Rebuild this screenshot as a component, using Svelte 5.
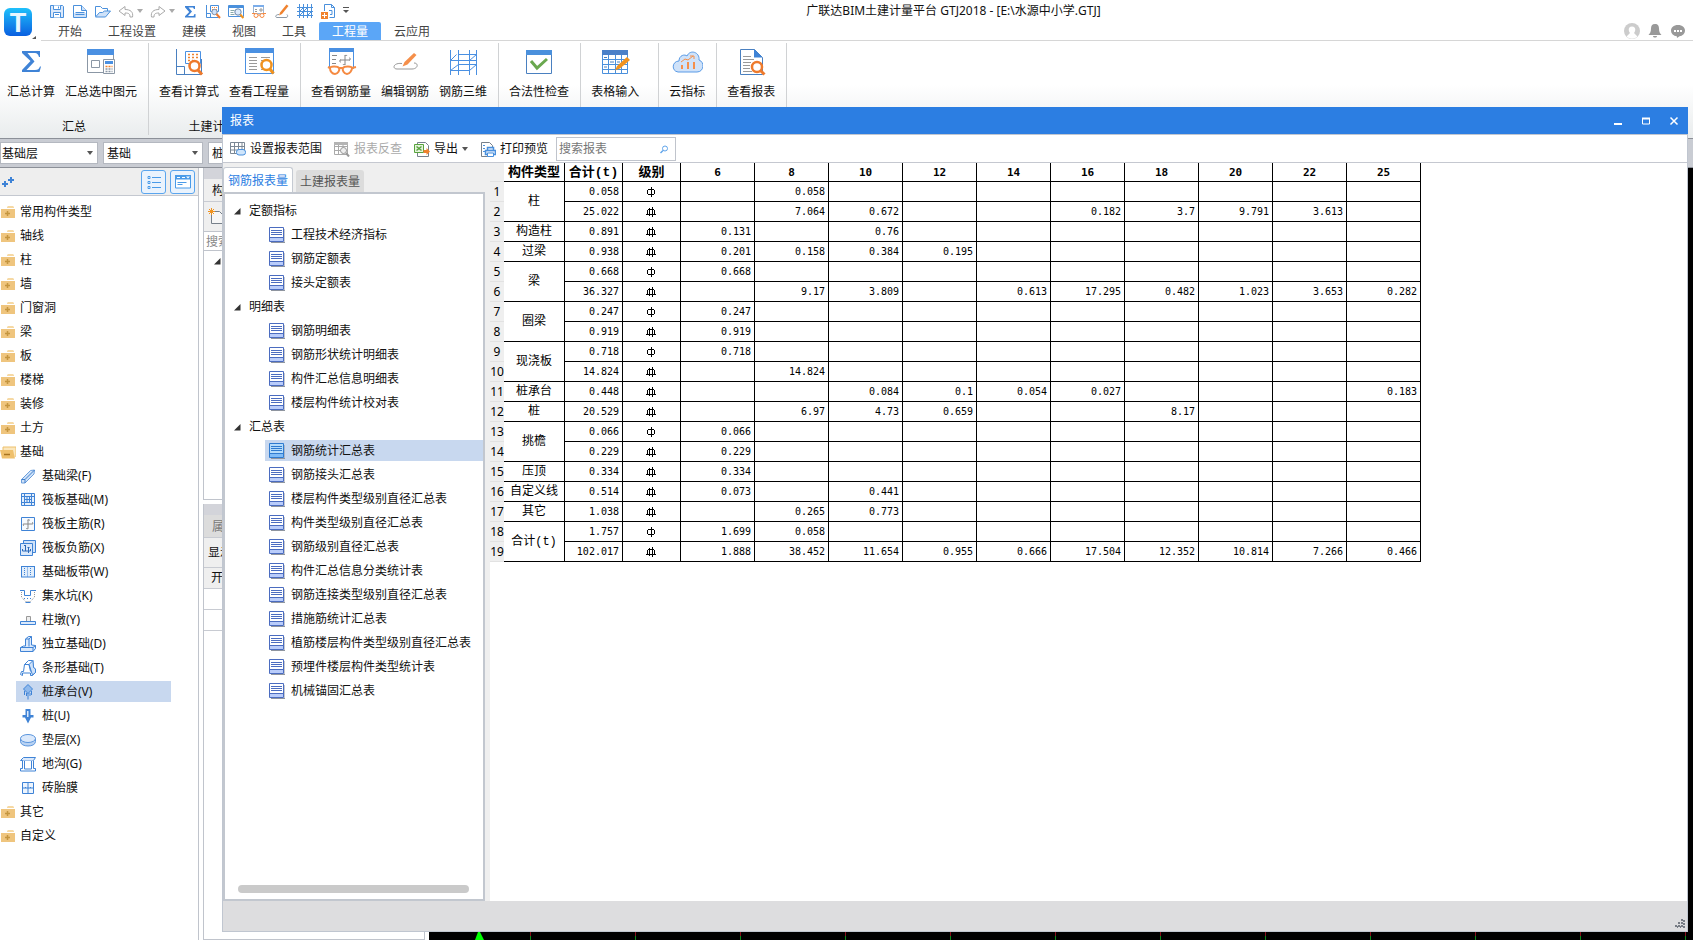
<!--
  Quantity take-off workspace: ribbon, component navigator and the report window.
-->
<script>
  const quickTools = [
    { icon: 'save', label: '保存' },
    { icon: 'page', label: '新建' },
    { icon: 'open', label: '打开' },
    { icon: 'undo', label: '撤销', split: true },
    { icon: 'redo', label: '恢复', split: true },
    { icon: 'sigmaSmall', label: '汇总计算' },
    { icon: 'formulaSmall', label: '查看计算式' },
    { icon: 'quantitySmall', label: '查看工程量' },
    { icon: 'rebarSmall', label: '查看钢筋量' },
    { icon: 'editSmall', label: '编辑钢筋' },
    { icon: 'gridSmall', label: '钢筋三维' },
    { icon: 'addPage', label: '添加' }
  ];

  const menuTabs = ['开始', '工程设置', '建模', '视图', '工具', '工程量', '云应用'];
  let activeMenu = $state('工程量');

  const ribbonGroups = [
    { label: '汇总', tools: [['sigma', '汇总计算'], ['calcSelected', '汇总选中图元']] },
    { label: '土建计算结果', tools: [['formula', '查看计算式'], ['quantity', '查看工程量']] },
    { tools: [['rebarView', '查看钢筋量'], ['rebarEdit', '编辑钢筋'], ['rebar3d', '钢筋三维']] },
    { tools: [['check', '合法性检查']] },
    { wide: true, tools: [['tableInput', '表格输入']] },
    { tools: [['cloud', '云指标']] },
    { tools: [['report', '查看报表']] }
  ];

  const categories = [
    { name: '常用构件类型' },
    { name: '轴线' },
    { name: '柱' },
    { name: '墙' },
    { name: '门窗洞' },
    { name: '梁' },
    { name: '板' },
    { name: '楼梯' },
    { name: '装修' },
    { name: '土方' },
    {
      name: '基础',
      items: [
        ['beam', '基础梁(F)'],
        ['raft', '筏板基础(M)'],
        ['raftMain', '筏板主筋(R)'],
        ['raftNeg', '筏板负筋(X)'],
        ['strip', '基础板带(W)'],
        ['pit', '集水坑(K)'],
        ['pier', '柱墩(Y)'],
        ['isolated', '独立基础(D)'],
        ['stripBase', '条形基础(T)'],
        ['pileCap', '桩承台(V)'],
        ['pile', '桩(U)'],
        ['cushion', '垫层(X)'],
        ['trench', '地沟(G)'],
        ['brick', '砖胎膜']
      ]
    },
    { name: '其它' },
    { name: '自定义' }
  ];
  let activeComponent = $state('桩承台(V)');

  const reportTree = [
    { name: '定额指标', items: ['工程技术经济指标', '钢筋定额表', '接头定额表'] },
    { name: '明细表', items: ['钢筋明细表', '钢筋形状统计明细表', '构件汇总信息明细表', '楼层构件统计校对表'] },
    {
      name: '汇总表',
      items: [
        '钢筋统计汇总表',
        '钢筋接头汇总表',
        '楼层构件类型级别直径汇总表',
        '构件类型级别直径汇总表',
        '钢筋级别直径汇总表',
        '构件汇总信息分类统计表',
        '钢筋连接类型级别直径汇总表',
        '措施筋统计汇总表',
        '植筋楼层构件类型级别直径汇总表',
        '预埋件楼层构件类型统计表',
        '机械锚固汇总表'
      ]
    }
  ];
  let activeReport = $state('钢筋统计汇总表');

  const diameters = ['6', '8', '10', '12', '14', '16', '18', '20', '22', '25'];

  // grade 1 = plain bar, grade 3 = HRB400; the rest maps diameter to tonnes
  const groups = [
    { type: '柱', rows: [
      { total: '0.058', grade: 1, 8: '0.058' },
      { total: '25.022', grade: 3, 8: '7.064', 10: '0.672', 16: '0.182', 18: '3.7', 20: '9.791', 22: '3.613' }
    ] },
    { type: '构造柱', rows: [{ total: '0.891', grade: 3, 6: '0.131', 10: '0.76' }] },
    { type: '过梁', rows: [{ total: '0.938', grade: 3, 6: '0.201', 8: '0.158', 10: '0.384', 12: '0.195' }] },
    { type: '梁', rows: [
      { total: '0.668', grade: 1, 6: '0.668' },
      { total: '36.327', grade: 3, 8: '9.17', 10: '3.809', 14: '0.613', 16: '17.295', 18: '0.482', 20: '1.023', 22: '3.653', 25: '0.282' }
    ] },
    { type: '圈梁', rows: [
      { total: '0.247', grade: 1, 6: '0.247' },
      { total: '0.919', grade: 3, 6: '0.919' }
    ] },
    { type: '现浇板', rows: [
      { total: '0.718', grade: 1, 6: '0.718' },
      { total: '14.824', grade: 3, 8: '14.824' }
    ] },
    { type: '桩承台', rows: [{ total: '0.448', grade: 3, 10: '0.084', 12: '0.1', 14: '0.054', 16: '0.027', 25: '0.183' }] },
    { type: '桩', rows: [{ total: '20.529', grade: 3, 8: '6.97', 10: '4.73', 12: '0.659', 18: '8.17' }] },
    { type: '挑檐', rows: [
      { total: '0.066', grade: 1, 6: '0.066' },
      { total: '0.229', grade: 3, 6: '0.229' }
    ] },
    { type: '压顶', rows: [{ total: '0.334', grade: 3, 6: '0.334' }] },
    { type: '自定义线', rows: [{ total: '0.514', grade: 3, 6: '0.073', 10: '0.441' }] },
    { type: '其它', rows: [{ total: '1.038', grade: 3, 8: '0.265', 10: '0.773' }] },
    { type: '合计(t)', rows: [
      { total: '1.757', grade: 1, 6: '1.699', 8: '0.058' },
      { total: '102.017', grade: 3, 6: '1.888', 8: '38.452', 10: '11.654', 12: '0.955', 14: '0.666', 16: '17.504', 18: '12.352', 20: '10.814', 22: '7.266', 25: '0.466' }
    ] }
  ];

  let counter = 0;
  const lines = groups.flatMap((group) =>
    group.rows.map((row, i) => ({ ...row, no: ++counter, type: group.type, span: i === 0 ? group.rows.length : 0 }))
  );

  // 16x16 icons
  const small = {
    save: '<path d="M1.5 2.5h12l1 1v11h-13z" fill="#dbe9fb" stroke="#4a90dc"/><path d="M4.5 2.5v4h7v-4M4.5 14.5v-5h7v5M6 11.5h4M9.5 3.500v2" fill="#fff" stroke="#4a90dc"/>',
    page: '<path d="M1.500 2.500h8l5 5v7h-13z" fill="#fff" stroke="#4a90dc"/><path d="M9.500 2.500v5h5" fill="#cfe2f9" stroke="#4a90dc"/><path d="M2 10h12v4h-12z" fill="#cfe2f9"/><path d="M3.500 9.500h9M3.500 11.500h9" stroke="#4a90dc"/>',
    open: '<path d="M.5 13.500v-10h5l2 2h5v3" fill="#fff" stroke="#4a90dc"/><path d="M.5 14l4-4.500h3l2-1.500h6l-5 6z" fill="#cfe2f9" stroke="#4a90dc"/>',
    undo: '<path d="M7 3.500L1 8l6 4.500V10c4 0 5 1 5 4h2.500C15.500 9 12.500 6.500 7 6.500z" fill="#fff" stroke="#aaa"/>',
    redo: '<path d="M9 3.500L15 8l-6 4.500V10c-4 0-5 1-5 4H1.500C.5 9 3.500 6.500 9 6.500z" fill="#fff" stroke="#aaa"/>',
    sigmaSmall: '<path d="M3 3h10v3h-1l-1-1.500H6.500L10 8.500 6 13h5.500l1-2h1v3.500H3v-1.300L7.200 9 3 4.200z" fill="#3f83d6"/>',
    formulaSmall: '<path d="M1.500 2v12.500h12M1.500 10.500h4v4M5.500 2.500h8v6h-8z" fill="none" stroke="#4a90dc"/><path d="M7 4.500h5M7 6.500h5" stroke="#f58a42" stroke-dasharray="1 1"/><circle cx="9.500" cy="9" r="2.700" fill="#cfe2f9" stroke="#7c8fa8"/><path d="M11.500 11l3.500 4" stroke="#f07b30" stroke-width="2"/>',
    quantitySmall: '<path d="M.5 2.500h15v11h-15z" fill="#fff" stroke="#4a90dc"/><path d="M1 2h14v3h-14z" fill="#4a90dc"/><path d="M2.500 7.500h4M2.500 9.500h3M2.500 11.500h4" stroke="#8aa"/><circle cx="10" cy="9" r="3.200" fill="#dcebfb" stroke="#6c87ab"/><path d="M12.300 11.500l3 3.500" stroke="#f0921e" stroke-width="2"/>',
    rebarSmall: '<path d="M2.500 2.500h10v8h-10z" fill="#fff" stroke="#9cb6d4"/><path d="M2 2h11v2h-11z" fill="#7badea"/><path d="M4 6.500h2M4 8.500h2M8 7h4M10 5v4" stroke="#999"/><circle cx="5" cy="12.500" r="2" fill="#fff" stroke="#f58a42"/><circle cx="11" cy="12.500" r="2" fill="#fff" stroke="#f58a42"/><path d="M1 10.500h3M12 10.500h3M7 12h2" stroke="#f58a42"/>',
    editSmall: '<path d="M12.500 1.500l2 1.500L8 11l-3 1.500 1-3z" fill="#f0822e"/><path d="M5 11.500c-4 0-4 3-2 3h9c2 0 2-2 1-3" fill="none" stroke="#8d99a5"/>',
    gridSmall: '<path d="M2.500 1v14M6.500 1v14M10.500 1v14M14.500 1v14M0 4.500h16M0 8.500h16M0 12.500h16M2.500 8.500l4-4M2.500 12.500l8-8M10.500 12.500l4-4" fill="none" stroke="#4a90dc"/>',
    addPage: '<path d="M4.500 8V1.500h7l3 3v10h-5" fill="#fff" stroke="#4a90dc"/><path d="M11.500 1.500v3h3M9 7.500h3v4h-2" fill="none" stroke="#4a90dc"/><path d="M1 9h7v7h-7z" fill="#f0822e"/><path d="M4.500 10v5M2 12.500h5" stroke="#fff"/>',
    user: '<circle cx="8" cy="8" r="8" fill="#ccc"/><path d="M8 3.500c4.500 0 3.500 5 2 6.500l3.500 3.500C10 16.500 6 16.500 2.500 13.500L6 10C4.500 8.500 3.500 3.500 8 3.500z" fill="#fff"/>',
    bell: '<path d="M8 1c3 0 4 2 4 4.500 0 3.500 1 5 2.500 6.500h-13C3 10.500 4 9 4 5.500 4 3 5 1 8 1zM6 13h4c0 2-4 2-4 0z" fill="#999"/>',
    chat: '<path d="M8 2c4.500 0 7 2.500 7 5.500S12.500 13 9.500 13.300L7 15l-.2-1.800C3.500 13 1 10.500 1 7.500S3.500 2 8 2z" fill="#999"/><path d="M4 7h2v2H4zM7 7h2v2H7zM10 7h2v2h-2z" fill="#fff"/>',
    folder: '<path d="M8 2h5l1 1v1H7V3z" fill="#f6d9a4"/><path d="M1 5h14v9H1z" fill="#efc57e"/><path d="M7.500 7v5M5 9.500h5" stroke="#c4953f" stroke-width="1.500"/>',
    folderOpen: '<path d="M3 13V3h13v10" fill="#fbe7bd" stroke="#edc06c"/><path d="M0 6h13l2 8.500H2z" fill="#efc06c"/><path d="M4 10.500h6" stroke="#a87420" stroke-width="1.500"/>',
    beam: '<path d="M1.500 11.500l9-9 4-.5-.5 4-9 9h-3.500z" fill="#cfe2f9" stroke="#6c9fdc"/><path d="M1.500 11.500h3.500v3.500M5 11.500l9.500-9.500" fill="none" stroke="#3f7fcb"/>',
    raft: '<path d="M1.500 1.500h13v12h-13z" fill="#e4effc" stroke="#3f83d6"/><path d="M4.500 1v3.500H1M11.500 1v3.500H15M4.500 14v-3.500H1M11.500 14v-3.500H15M4.500 4.500h7v6h-7zM7 4.500v6M9.500 4.500v6M4.500 7.500h7" fill="none" stroke="#3f83d6"/>',
    raftMain: '<path d="M1.500 1.500h13v13h-13z" fill="#f6faff" stroke="#3f83d6"/><path d="M8 3.500v9M3.500 8h9M9.500 4.500c0-1.500-1.500-1-1.500 0M6.500 12c0 1.500 1.500 1 1.500 0M4 9.500c-1.500 0-1-1.500 0-1.500M12 6.500c1.500 0 1 1.500 0 1.500" fill="none" stroke="#888"/>',
    raftNeg: '<path d="M3.500 3V.5h12v12h-3" fill="#cfe2f9" stroke="#3f83d6"/><path d="M.5 3.500h12v12h-12z" fill="#dbe9fb" stroke="#3f83d6"/><path d="M2.500 11h8M5.500 5v6M8.500 7v6M4 5.500h2M7.500 7.500h2M2.500 9v2M10.500 9v2" stroke="#2a69b8"/>',
    strip: '<path d="M1.500 3v10M7.500 3v10M14.500 3v10" stroke="#3f83d6"/><path d="M2 3h12v10H2z" fill="#cfe2f9" opacity=".6"/><path d="M1 2.500h14M1 13h14" stroke="#3f83d6"/><path d="M4.500 4v8M10.500 4v8" stroke="#3f83d6" stroke-dasharray="1 1"/>',
    pit: '<path d="M0 2.500h4.500v5h6v-5H16" fill="none" stroke="#3f83d6"/><path d="M1.500 4v5l4 4.500h5l4-4.500V4" fill="none" stroke="#999" stroke-dasharray="1 1"/><path d="M4 10.500h8" stroke="#3f83d6" stroke-dasharray="1 2"/><path d="M5.500 14.500h5" stroke="#3f83d6"/>',
    pier: '<path d="M6.500 9V4.500h4V9" fill="#eee" stroke="#999"/><path d="M.5 9.500h15v3h-15z" fill="#dbe9fb" stroke="#3f83d6"/>',
    isolated: '<path d="M5.500 10V3l3-2.500h3V9l4 .5v3l-2.500 3H.5v-4l3-1.500z" fill="#dbe9fb" stroke="#3f83d6"/><path d="M5.500 3h3.500v7.500M9 3l2.500-2.500M.5 11.500h12.500v4M13 11.500l2.500-2" fill="none" stroke="#3f83d6"/>',
    stripBase: '<path d="M.5 14.500l1-3h2l1-7 4-4h4l1 7 2 1.500v3.500l-3 3h-2v-2.500h-8v2.500z" fill="#fff" stroke="#3f83d6"/><path d="M9 4.500l4-4 .5 7 2 1.500v3.500l-3 2.500z" fill="#cfe2f9" stroke="#3f83d6"/><path d="M4.500 4.500H9l1.500 7" fill="none" stroke="#3f83d6"/>',
    pileCap: '<path d="M8 .5l4.500 4.500L8 9.500 3.500 5z" fill="#8fb9ec" stroke="#3f83d6"/><path d="M4.500 7v4M6.500 9v3M8 9v6.500M10 9v3M11.500 7v4" stroke="#3f83d6"/>',
    pile: '<path d="M5.500 1h5v6h3v2.500h-2.500L8 15.500 5 9.500H2.500V7h3z" fill="#3f83d6"/><path d="M7 3h1.500v6H7z" fill="#dbe9fb"/>',
    cushion: '<path d="M.5 6.500v3c0 6 15 6 15 0v-3z" fill="#b9d3f3" stroke="#5a95dd"/><ellipse cx="8" cy="6.500" rx="7.500" ry="4" fill="#dbe9fb" stroke="#5a95dd"/>',
    trench: '<path d="M3.500 1.500h12l-2 3H.5z" fill="#dbe9fb" stroke="#3f83d6"/><path d="M2.500 4.500v8h-2v2.500h15v-2.500h-2V4.500M4.500 5v8h7V5" fill="#fff" stroke="#3f83d6"/>',
    brick: '<path d="M2.500 2.500h11v11h-11zM8 2.500v11M2.500 8h11M5.500 7v1M10.500 7v1" fill="#eef5fd" stroke="#3f83d6"/>',
    addTwo: '<path d="M5 7v6M2 10h6M11 3v6M8 6h6" stroke="#3f83d6" stroke-width="2"/>',
    newItem: '<path d="M3.500 3.500h8l4 4v8h-12z" fill="#f6f6f6" stroke="#77808a"/><path d="M1 1l5 5M6 1L1 6M3.500 0v7M0 3.500h7" stroke="#f0921e"/>',
    reportRange: '<path d="M.5 1.500h14v11H.5zM.5 5.500h14M.5 9h14M4.500 1.500v11M8.500 1.500v11M12 1.500v8" fill="none" stroke="#7b8794"/><rect x="6.500" y="8.500" width="9" height="5.500" rx="2.500" fill="#cfe5fb" stroke="#4a90dc"/>',
    reportBack: '<path d="M.5 1.500h13v12H.5zM.5 5.500h13M.5 9.500h13M4.500 1.500v12M9 1.500v12" fill="none" stroke="#aaa"/><path d="M0 1h14v3H0z" fill="#b4b4b4"/><circle cx="9.500" cy="9.500" r="3" fill="#eee" stroke="#999"/><path d="M12 12l3 3.500" stroke="#999" stroke-width="2"/>',
    exportFile: '<path d="M3.500 1.500h8l3 3v11h-11z" fill="#fff" stroke="#77808a"/><path d="M.5 3.500h9v8h-9z" fill="#e4f3dc" stroke="#57a23c"/><path d="M2.500 5.500l5 4M7.500 5.500l-5 4" stroke="#57a23c" stroke-width="1.500"/><path d="M9.500 9h3V7l3.500 3.500-3.500 3.500v-2h-3z" fill="#f0822e"/>',
    printView: '<path d="M1.500 1.500h8l3 3v11h-11z" fill="#fff" stroke="#77808a"/><path d="M3 4.500h2M3 7.500h2M3 10.500h2" stroke="#4a90dc"/><path d="M5.500 9.500h10v4h-10zM7.500 6.500h6v3h-6z" fill="#dbe9fb" stroke="#4a90dc" stroke-width="1.500"/><path d="M7.500 12h6v3.500h-6z" fill="#fff" stroke="#4a90dc"/>',
    report: '<path d="M2 15.500h14V2" fill="none" stroke="#8f959f"/><path d="M.5 .5h14v14H.5z" fill="#fff" stroke="#4b6cc0"/><path d="M1 10h13v4H1z" fill="#b9ccfa"/><path d="M2 3.500h11M2 5.500h11M2 7.500h11M1 10.500h13" stroke="#4b6cc0"/>',
    reportActive: '<path d="M2 15.500h14V2" fill="none" stroke="#8f959f"/><path d="M.5 .5h14v14H.5z" fill="#b5dcfb" stroke="#2f7bd0"/><path d="M1 10h13v4H1z" fill="#7fbcf8"/><path d="M2 3.500h11M2 5.500h11M2 7.500h11M1 10.500h13" stroke="#2f7bd0"/>',
    search: '<circle cx="9" cy="7.500" r="2.500" fill="none" stroke="#5fa4ea"/><path d="M7 9.500L4.500 12" stroke="#5fa4ea" stroke-width="1.500"/>',
    minimize: '<path d="M4 10h8v2H4z" fill="#fff"/>',
    maximize: '<path d="M4.500 5.500h7v5.500h-7z" fill="none" stroke="#fff"/><path d="M4 4.500h8v2H4z" fill="#fff"/>',
    close: '<path d="M4.500 4.500l7 7M11.500 4.500l-7 7" stroke="#fff" stroke-width="1.500"/>',
    listView: '<path d="M2 2.500h2v2H2zM2 7.500h2v2H2zM2 12.500h2v2H2z" fill="#fff" stroke="#4a9be8"/><path d="M6 3.500h9M6 8.500h9M6 13.500h9" stroke="#4a9be8"/>',
    panelView: '<path d="M.5 1.500h15v12.500H.5z" fill="#fff" stroke="#4a9be8"/><path d="M0 1h16v4.500H0z" fill="#4a9be8"/><path d="M2 3.500h3M7 3.500h3" stroke="#fff"/><path d="M11 2.500h4l-2 2z" fill="#fff"/><path d="M2.500 8.500h9M2.500 10.500h5" stroke="#4a9be8"/>'
  };

  // 32x32 ribbon icons
  const large = {
    sigma: '<path d="M7 5h18v6h-1c-1-3-2-4-4-4h-7.500l7 8.500-8 8.500H20c3 0 4-1 5-3.500h1L24.500 26H7v-2l8.500-9L7 7z" fill="#3f83d6"/>',
    calcSelected: '<path d="M2.500 3.500h26v23h-26z" fill="#fff" stroke="#8b97a5"/><path d="M2 3h27v6H2z" fill="#4a90e2"/><path d="M6.500 14.500h8v7h-8z" fill="#fff" stroke="#8b97a5"/><path d="M18.500 13.500h11v14h-11z" fill="#fff" stroke="#8b97a5"/><path d="M20 15h8v3h-8z" fill="#4a90e2"/><path d="M20.500 20.500h7" stroke="#f0822e" stroke-width="1.500" stroke-dasharray="2 1"/><path d="M20.500 23h7M20.500 25.500h7" stroke="#8b97a5" stroke-width="1.500" stroke-dasharray="2 1"/>',
    formula: '<path d="M3.500 3v25.500h25V13M3.500 20.500h8v8" fill="none" stroke="#4a80c0"/><path d="M12.500 5.500h15v12h-15z" fill="#fff" stroke="#4a90e2"/><path d="M15 8.500h11M15 11.500h11M15 14.500h5" stroke="#f0822e" stroke-width="1.500" stroke-dasharray="2 2"/><circle cx="21.500" cy="20" r="5" fill="#fff" stroke="#ee7a2c" stroke-width="2.500"/><path d="M25 24l4 4.500" stroke="#ee7a2c" stroke-width="3"/>',
    quantity: '<path d="M2.500 2.500h28v25h-28z" fill="#fff" stroke="#4a90e2"/><path d="M2 2h29v5H2z" fill="#4a90e2"/><path d="M6 11.500h8M6 14.500h8M6 17.500h8M6 20.500h8M6 23.500h8M18 11.500h9M18 14.500h3M18 23.500h3" stroke="#9a9a9a"/><circle cx="23.500" cy="19" r="5" fill="#fff" stroke="#f0921e" stroke-width="2.500"/><path d="M27 23l3.500 4.500" stroke="#f0921e" stroke-width="3"/>',
    rebarView: '<path d="M4.500 2.500h24v20h-24z" fill="#fff" stroke="#4a90e2"/><path d="M4 2h25v4H4z" fill="#4a90e2"/><path d="M7 9.500h5M7 13.500h4M7 17.500h4" stroke="#888"/><path d="M15 14h10M20 9v10M16 16c-2 0-2-2 0-2M24 12c2 0 2 2 0 2M18 18c0 1 2 1 2 0M22 10c0-1-2-1-2 0" fill="none" stroke="#888"/><path d="M5 22c0-2 8-2 9 0s-1 6-4 6-5-3-5-6zM18 22c1-2 9-2 9 0s-2 6-5 6-5-4-4-6z" fill="#fff" stroke="#f58a42" stroke-width="2"/><path d="M14 22h4M5 22l-2-1M27 22l4-1" stroke="#f58a42" stroke-width="2"/>',
    rebarEdit: '<path d="M25 7l2.500 2-9 9.500-5 2 2-4.500z" fill="#f58f4a"/><path d="M13 17.500c-9-1-10 5.500-5 5.500h15c6 0 7-6 2-6" fill="none" stroke="#999"/>',
    rebar3d: '<path d="M3.500 4v25M11.500 4v25M22.500 4v25M29.500 4v25M3.500 24.500h19M3.500 14.500h26M11.500 8.500h18M11.500 18.500h18M3.500 14.500l6-6M22.500 14.500l7-6M3.500 24.500l8-6M22.500 24.500l7-6" fill="none" stroke="#4a90e2"/>',
    check: '<path d="M3.500 4.500h25v23h-25z" fill="#fff" stroke="#4a80c0"/><path d="M3 4h26v5H3z" fill="#4a90dc"/><path d="M8 15l6 7 10-9" fill="none" stroke="#6aa84f" stroke-width="3"/>',
    tableInput: '<path d="M3.500 4.500h25v23h-25zM3.500 13.500h25M3.500 18.500h25M3.500 23.500h25M9.500 9v18M16.500 9v18M22.500 9v18" fill="#fff" stroke="#4a90dc"/><path d="M3 4h26v5H3z" fill="#4a80c8"/><path d="M5 11.500h3M11 16h4M5 21h3M18 16h3" stroke="#4a80c0" /><path d="M28 11l3 3-10 8.500-5 2 2-4.500z" fill="#f0921e"/>',
    cloud: '<path d="M7 26c-7-1-6-11 1-11 0-6 6-7 8-5 3-7 13-4 12 4 6 2 5 12-2 12z" fill="#cfe2f9" stroke="#5a9be6"/><path d="M11 23v-4M17 23v-7M23 23v-7" stroke="#f58f4a" stroke-width="2"/><path d="M10 16l4-3 3 1 5-4M19 10h4v3" fill="none" stroke="#f58f4a"/>',
    report: '<path d="M5.500 3.500h14l8 8v17h-22z" fill="#fff" stroke="#4a80c0"/><path d="M19 3v8.500h8.500z" fill="#3f83d6"/><path d="M8 10.500h8M8 13.500h11M8 16.500h8M8 19.500h7M8 22.500h7M8 25.500h9" stroke="#999"/><circle cx="22" cy="21" r="5" fill="#fff" stroke="#ee7a2c" stroke-width="2.500"/><path d="M25.500 24.500l4 4" stroke="#ee7a2c" stroke-width="3"/>'
  };
</script>

{#snippet icon(name)}
  <svg class="icon" viewBox="0 0 16 16" aria-hidden="true">{@html small[name]}</svg>
{/snippet}

{#snippet caret()}
  <svg class="caret" viewBox="0 0 6 4" aria-hidden="true"><path d="M0 0h6L3 4z" fill="currentColor" /></svg>
{/snippet}

{#snippet twisty()}
  <svg class="twisty" viewBox="0 0 7 7" aria-hidden="true"><path d="M6.500 0v6.500H0z" fill="#333" /></svg>
{/snippet}

<div class="app">
  <header class="app-header">
    <div class="logo">
      <svg viewBox="0 0 41 41" aria-hidden="true">
        <defs>
          <linearGradient id="logo-fill" x1="0" y1="0" x2="0" y2="1">
            <stop offset="0" stop-color="#1fc0fb" />
            <stop offset="1" stop-color="#0a5fe0" />
          </linearGradient>
        </defs>
        <rect x="4" y="8" width="28" height="28" rx="6" fill="url(#logo-fill)" />
        <text x="18" y="32" text-anchor="middle" class="logo-letter">T</text>
        <path d="M36 36v3h-4z" fill="#555" />
      </svg>
    </div>
    <div class="header-main">
      <div class="title-row">
        <div class="quick-tools">
          {#each quickTools as tool}
            <button class="quick" aria-label={tool.label}>
              {@render icon(tool.icon)}
              {#if tool.split}{@render caret()}{/if}
            </button>
          {/each}
          <button class="quick more" aria-label="更多">
            <svg viewBox="0 0 6 7" aria-hidden="true"><path d="M0 .5h6" stroke="#555" /><path d="M0 3h6L3 6z" fill="#555" /></svg>
          </button>
        </div>
        <h1>广联达BIM土建计量平台 GTJ2018 - [E:\水源中小学.GTJ]</h1>
      </div>
      <div class="menu-row">
        <nav>
          {#each menuTabs as tab}
            <button class="menu-tab" class:active={tab === activeMenu} onclick={() => (activeMenu = tab)}>{tab}</button>
          {/each}
        </nav>
        <div class="account">
          <button class="quick" aria-label="用户">{@render icon('user')}</button>
          <button class="quick" aria-label="通知">{@render icon('bell')}</button>
          <button class="quick" aria-label="消息">{@render icon('chat')}</button>
        </div>
      </div>
    </div>
  </header>

  <div class="ribbon">
    {#each ribbonGroups as group}
      <section class="ribbon-group" class:wide={group.wide}>
        <div class="ribbon-tools">
          {#each group.tools as [name, label]}
            <button class="ribbon-tool">
              <svg viewBox="0 0 32 32" aria-hidden="true">{@html large[name]}</svg>
              {label}
            </button>
          {/each}
        </div>
        {#if group.label}<div class="ribbon-label">{group.label}</div>{/if}
      </section>
    {/each}
  </div>

  <div class="filter-bar">
    <div class="combo first">
      <select aria-label="楼层"><option>基础层</option></select>
    </div>
    <div class="combo">
      <select aria-label="构件分类"><option>基础</option></select>
    </div>
    <div class="combo">
      <select aria-label="构件类型"><option>桩承台</option></select>
    </div>
  </div>

  <div class="workspace">
    <aside class="navigator">
      <div class="nav-tools">
        <button class="quick" aria-label="展开">{@render icon('addTwo')}</button>
        <div class="nav-views">
          <button class="view-button" aria-label="列表视图">{@render icon('listView')}</button>
          <button class="view-button" aria-label="面板视图">{@render icon('panelView')}</button>
        </div>
      </div>
      <ul class="nav-list">
        {#each categories as category}
          <li>
            <button class="nav-row">
              {@render icon(category.items ? 'folderOpen' : 'folder')}
              {category.name}
            </button>
            {#if category.items}
              <ul>
                {#each category.items as [name, label]}
                  <li>
                    <button
                      class="nav-row child"
                      class:selected={label === activeComponent}
                      onclick={() => (activeComponent = label)}
                    >
                      {@render icon(name)}
                      {label}
                    </button>
                  </li>
                {/each}
              </ul>
            {/if}
          </li>
        {/each}
      </ul>
    </aside>

    <aside class="side-panels">
      <section class="side-panel components">
        <div class="grip"></div>
        <h2>构件列表</h2>
        <div class="side-tools">{@render icon('newItem')}</div>
        <input type="search" placeholder="搜索构件" aria-label="搜索构件" />
        <div class="side-tree">{@render twisty()}</div>
      </section>
      <section class="side-panel properties">
        <div class="grip"></div>
        <h2 class="muted">属性列表</h2>
        <div class="side-text">显示</div>
        <div class="side-text short">开</div>
        <div class="side-cell"></div>
        <div class="side-cell"></div>
      </section>
    </aside>

    <div class="canvas">
      <svg width="100%" height="8" aria-hidden="true">
        <defs>
          <pattern id="axis-ticks" x="101" width="105" height="8" patternUnits="userSpaceOnUse">
            <rect width="1" height="4" fill="#8a0f1c" />
            <rect y="4" width="1" height="4" fill="#0a8a1c" />
          </pattern>
        </defs>
        <rect width="100%" height="8" fill="url(#axis-ticks)" />
        <path d="M49 0h2l4 8h-9z" fill="#0f0" />
      </svg>
    </div>
  </div>

  <div class="report-window" role="dialog" aria-labelledby="report-title">
    <div class="window-title">
      <h2 id="report-title">报表</h2>
      <button class="window-button" aria-label="最小化">{@render icon('minimize')}</button>
      <button class="window-button" aria-label="最大化">{@render icon('maximize')}</button>
      <button class="window-button" aria-label="关闭">{@render icon('close')}</button>
    </div>
    <div class="window-main">
      <div class="toolbar">
        <button class="tool">{@render icon('reportRange')}设置报表范围</button>
        <button class="tool" disabled>{@render icon('reportBack')}报表反查</button>
        <button class="tool">{@render icon('exportFile')}导出{@render caret()}</button>
        <button class="tool">{@render icon('printView')}打印预览</button>
        <label class="search-box">
          <input type="text" placeholder="搜索报表" aria-label="搜索报表" />
          {@render icon('search')}
        </label>
      </div>

      <div class="window-body">
        <div class="report-nav">
          <div class="report-tabs" role="tablist">
            <button class="report-tab active" role="tab" aria-selected="true">钢筋报表量</button>
            <button class="report-tab" role="tab" aria-selected="false">土建报表量</button>
          </div>
          <div class="report-tree">
            <ul>
              {#each reportTree as branch}
                <li>
                  <button class="branch">{@render twisty()}{branch.name}</button>
                  <ul>
                    {#each branch.items as item}
                      <li>
                        <button
                          class="leaf"
                          class:selected={item === activeReport}
                          onclick={() => (activeReport = item)}
                        >
                          {@render icon(item === activeReport ? 'reportActive' : 'report')}
                          {item}
                        </button>
                      </li>
                    {/each}
                  </ul>
                </li>
              {/each}
            </ul>
            <div class="scrollbar"></div>
          </div>
        </div>

        <div class="sheet">
          <table>
            <colgroup>
              <col class="col-no" />
              <col class="col-type" />
              <col class="col-mid" />
              <col class="col-mid" />
              {#each diameters as d (d)}<col class="col-dia" />{/each}
            </colgroup>
            <thead>
              <tr>
                <td class="row-no"></td>
                <th>构件类型</th>
                <th>合计(t)</th>
                <th>级别</th>
                {#each diameters as d (d)}<th class="dia">{d}</th>{/each}
              </tr>
            </thead>
            <tbody>
              {#each lines as line (line.no)}
                <tr>
                  <td class="row-no">{line.no}</td>
                  {#if line.span}<td class="type" rowspan={line.span}>{line.type}</td>{/if}
                  <td>{line.total}</td>
                  <td class="grade">
                    <svg viewBox="0 0 10 10" aria-hidden="true">
                      {#if line.grade === 1}
                        <path d="M5.500 0v10M2 2.500h6M2 7.500h6M1.500 3v4M8.500 3v4" />
                      {:else}
                        <path d="M3.500 1v8M6.500 0v10M2 2.500h6M0 7.500h10M1.500 3v4M8.500 3v4" />
                      {/if}
                    </svg>
                  </td>
                  {#each diameters as d (d)}<td>{line[d] ?? ''}</td>{/each}
                </tr>
              {/each}
            </tbody>
          </table>
        </div>
      </div>

      <footer class="status">
        <svg viewBox="0 0 10 10" aria-hidden="true">
          <path d="M6 0h2v2H6zM8 1h2v2H8zM3 3h2v2H3zM6 3h2v2H6zM8 4h2v2H8zM0 6h2v2H0zM3 6h2v2H3zM6 6h2v2H6zM8 7h2v2H8zM2 7h1v2H2zM5 7h1v2H5z" fill="#777c85" />
        </svg>
      </footer>
    </div>
  </div>
</div>

<style>
  :global(body) {
    margin: 0;
    background: #fff;
  }

  .app {
    position: relative;
    display: flex;
    flex-direction: column;
    height: 100vh;
    overflow: hidden;
    color: #111;
    font: 12px/16px "Noto Sans", "Noto Sans CJK SC", sans-serif;
  }

  button,
  input,
  select {
    margin: 0;
    padding: 0;
    border: 0;
    background: none;
    color: inherit;
    font: inherit;
  }

  h1,
  h2 {
    margin: 0;
    font-size: 12px;
    font-weight: 400;
  }

  ul {
    margin: 0;
    padding: 0;
    list-style: none;
  }

  li {
    display: flow-root;
  }

  .icon {
    display: block;
    flex: none;
    width: 16px;
    height: 16px;
  }

  .caret {
    flex: none;
    width: 6px;
    height: 4px;
    color: #555;
  }

  .twisty {
    flex: none;
    width: 7px;
    height: 7px;
  }

  /* Header */
  .app-header {
    display: flex;
    height: 41px;
  }

  .logo {
    width: 41px;
  }

  .logo-letter {
    fill: #e8f6ff;
    font: bold 27px "Liberation Sans", sans-serif;
  }

  .header-main {
    flex: 1;
    border-bottom: 1px solid #d6d6d6;
  }

  .title-row {
    display: flex;
    align-items: center;
    height: 21px;
    padding: 0 135px 0 8px;
  }

  .title-row h1 {
    flex: 1;
    text-align: center;
  }

  .quick-tools {
    display: flex;
    gap: 7px;
  }

  .quick {
    display: flex;
    align-items: center;
    gap: 3px;
  }

  .quick .caret {
    color: #aaa;
  }

  .more svg {
    width: 6px;
    height: 7px;
  }

  .menu-row {
    display: flex;
    justify-content: space-between;
    height: 18px;
    padding: 1px 7px 0 4px;
  }

  nav {
    display: flex;
  }

  .menu-tab {
    padding: 2px 13px 0;
    color: #444;
  }

  .menu-tab.active {
    border-radius: 2px 2px 0 0;
    background: #5ba6f7;
    color: #fff;
  }

  .account {
    display: flex;
    gap: 7px;
  }

  /* Ribbon */
  .ribbon {
    display: flex;
    height: 97px;
    background: linear-gradient(#fff 45%, #e9eced);
    border-bottom: 1px solid #8c9098;
  }

  .ribbon-group {
    display: flex;
    flex-direction: column;
    justify-content: space-between;
    margin: 2px 0 3px;
    border-right: 1px solid #d0d2d4;
  }

  .ribbon-group.wide {
    min-width: 77px;
  }

  .ribbon-tools {
    display: flex;
    padding: 0 6px 0 5px;
  }

  .ribbon-group:first-child .ribbon-tools {
    padding-left: 2px;
  }

  .ribbon-tool {
    display: flex;
    flex-direction: column;
    align-items: center;
    gap: 6px;
    padding: 3px 5px 0;
  }

  .ribbon-tool svg {
    width: 32px;
    height: 32px;
  }

  .ribbon-label {
    text-align: center;
  }

  /* Filter bar */
  .filter-bar {
    display: flex;
    align-items: center;
    gap: 5px;
    height: 28px;
    border-bottom: 1px solid #8c9098;
    background: #c9ccd3;
  }

  .combo {
    display: grid;
    align-items: center;
    width: 100px;
  }

  .combo.first {
    width: 98px;
  }

  .combo select {
    grid-area: 1 / 1;
    height: 22px;
    padding: 1px 3px 0;
    border: 1px solid #b4b8c0;
    border-radius: 0;
    background: #fff;
    appearance: none;
  }

  .combo.first select {
    padding-left: 1px;
  }

  .combo::after {
    grid-area: 1 / 1;
    justify-self: end;
    margin-right: 5px;
    border: 3px solid transparent;
    border-top: 4px solid #555;
    border-bottom: 0;
    content: "";
    pointer-events: none;
  }

  /* Workspace */
  .workspace {
    display: flex;
    flex: 1;
    min-height: 0;
  }

  .navigator {
    width: 198px;
    border-right: 1px solid #c0c4cc;
  }

  .nav-tools {
    display: flex;
    align-items: center;
    justify-content: space-between;
    height: 27px;
    padding-right: 3px;
    border-bottom: 1px solid #c4c8d0;
    background: #eee;
  }

  .nav-views {
    display: flex;
    gap: 4px;
  }

  .view-button {
    display: grid;
    place-items: center;
    width: 25px;
    height: 24px;
    border: 1px solid #5aa5ee;
    border-radius: 3px;
    background: #eaf3fd;
  }

  .nav-list {
    padding-top: 4px;
  }

  .nav-row {
    display: flex;
    align-items: center;
    gap: 4px;
    width: 100%;
    height: 24px;
    text-align: left;
  }

  .nav-row.child {
    gap: 6px;
    width: 155px;
    height: 21px;
    margin: 1px 0 2px 16px;
    padding-left: 4px;
  }

  .nav-row.selected {
    background: #c8d8ef;
  }

  .side-panels {
    display: flex;
    flex-direction: column;
    gap: 4px;
    width: 222px;
    margin-left: 4px;
  }

  .side-panel {
    display: flex;
    flex-direction: column;
    border: 1px solid #c0c4cc;
    border-top: 0;
  }

  .components {
    height: 331px;
  }

  .properties {
    flex: 1;
  }

  .grip {
    height: 11px;
    background: #d3d4da;
  }

  .side-panel h2 {
    padding: 4px 8px 2px;
    border-bottom: 1px solid #c8cbd2;
    background: #efefef;
  }

  .side-panel h2.muted {
    background: #dcdcdc;
    color: #777;
  }

  .side-tools {
    padding: 6px 4px 7px;
    border-bottom: 1px solid #c0c4cc;
    background: #efefef;
  }

  .side-panel input {
    height: 19px;
    padding: 0 2px;
    border-bottom: 1px solid #c0c4cc;
  }

  .side-panel input::placeholder {
    color: #888;
  }

  .side-tree {
    padding: 2px 10px;
  }

  .side-text {
    padding: 7px 4px 6px;
    border-bottom: 1px solid #c8cbd2;
    background: #efefef;
  }

  .side-text.short {
    padding: 2px 7px;
  }

  .side-cell {
    height: 20px;
    border-bottom: 1px solid #c8cbd2;
  }

  .canvas {
    display: flex;
    flex: 1;
    align-items: flex-end;
    margin-left: 4px;
    background: #000;
  }

  .canvas svg {
    display: block;
  }

  /* Report window floats over the workspace */
  .report-window {
    position: absolute;
    top: 107px;
    right: 5px;
    bottom: 8px;
    left: 222px;
    display: flex;
    flex-direction: column;
    background: #fff;
  }

  .window-title {
    display: flex;
    align-items: center;
    height: 27px;
    padding-left: 8px;
    background: #2c7ee2;
    color: #fff;
  }

  .window-title h2 {
    flex: 1;
  }

  .window-button {
    display: grid;
    place-items: center;
    width: 28px;
    height: 27px;
  }

  .window-main {
    display: flex;
    flex: 1;
    flex-direction: column;
    min-height: 0;
    border: 1px solid #c0c6d0;
  }

  .toolbar {
    display: flex;
    align-items: center;
    gap: 5px;
    height: 27px;
    padding-left: 3px;
    border-bottom: 1px solid #c5c8d0;
  }

  .tool {
    display: flex;
    align-items: center;
    gap: 4px;
    padding: 0 3px 0 4px;
  }

  .tool:disabled {
    color: #aaa;
  }

  .search-box {
    display: flex;
    align-items: center;
    width: 118px;
    height: 22px;
    border: 1px solid #c0c4cc;
  }

  .search-box input {
    flex: 1;
    min-width: 0;
    padding-left: 2px;
    outline: 0;
  }

  .search-box input::placeholder {
    color: #777;
  }

  .search-box .icon {
    margin-right: 3px;
  }

  .window-body {
    display: flex;
    flex: 1;
    min-height: 0;
  }

  .report-nav {
    display: flex;
    flex-direction: column;
    width: 262px;
    padding-right: 5px;
    background: #efefef;
  }

  .report-tabs {
    display: flex;
    align-items: flex-end;
    gap: 3px;
    height: 29px;
  }

  .report-tab {
    height: 22px;
    padding: 1px 4px 0;
    border-radius: 3px 3px 0 0;
    background: #dcdcdc;
    color: #555;
  }

  .report-tab.active {
    height: 25px;
    border: 1px solid #c5cad2;
    border-bottom: 0;
    background: #fff;
    color: #2c7ee2;
  }

  .report-tree {
    display: flex;
    flex: 1;
    flex-direction: column;
    justify-content: space-between;
    min-height: 0;
    padding: 5px 0 6px;
    border: 2px solid #c2c7cf;
    background: #fff;
  }

  .branch,
  .leaf {
    display: flex;
    align-items: center;
    width: 100%;
    text-align: left;
  }

  .branch {
    gap: 8px;
    height: 24px;
    padding-left: 9px;
  }

  .leaf {
    gap: 6px;
    width: 218px;
    height: 21px;
    margin: 1px 0 2px 40px;
    padding-left: 4px;
    white-space: nowrap;
  }

  .leaf.selected {
    background: #c8d8ef;
  }

  .scrollbar {
    height: 8px;
    margin: 0 14px 0 13px;
    border-radius: 4px;
    background: #cacaca;
  }

  /* Report sheet */
  .sheet {
    flex: 1;
    min-width: 0;
    overflow: hidden;
  }

  table {
    table-layout: fixed;
    width: 931px;
    border-spacing: 0;
  }

  .col-no {
    width: 14px;
  }

  .col-type {
    width: 61px;
  }

  .col-mid {
    width: 58px;
  }

  .col-dia {
    width: 74px;
  }

  th,
  td {
    box-sizing: border-box;
    height: 20px;
    padding: 0;
    border: solid #000;
    border-width: 0 1px 1px 0;
    line-height: 16px;
    white-space: nowrap;
  }

  th {
    height: 19px;
    padding-top: 1px;
    color: #000;
    font: bold 13px/16px "Liberation Mono", "Noto Sans CJK SC", monospace;
  }

  th.dia {
    font: bold 11px/16px "DejaVu Sans Mono", monospace;
  }

  td {
    padding-right: 3px;
    color: #000;
    font: 10px/16px "DejaVu Sans Mono", monospace;
    text-align: right;
  }

  td.type {
    padding: 0;
    font: 12px/16px "Liberation Mono", "Noto Sans CJK SC", monospace;
    text-align: center;
  }

  td.row-no {
    padding: 0;
    border: 0;
    border-bottom: 1px solid #e2e2e2;
    background: #efefef;
    font: 12px/16px "Noto Sans", sans-serif;
    text-align: center;
  }

  thead td.row-no {
    height: 19px;
  }

  td.grade {
    padding: 0 1px 0 0;
    text-align: center;
  }

  .grade svg {
    display: block;
    width: 10px;
    height: 10px;
    margin: 0 auto;
    fill: none;
    stroke: #000;
    shape-rendering: crispEdges;
  }

  .status {
    display: flex;
    align-items: flex-end;
    justify-content: flex-end;
    height: 30px;
    background: #dddddf;
  }

  .status svg {
    width: 10px;
    height: 10px;
    margin: 0 2px 2px 0;
  }
</style>
